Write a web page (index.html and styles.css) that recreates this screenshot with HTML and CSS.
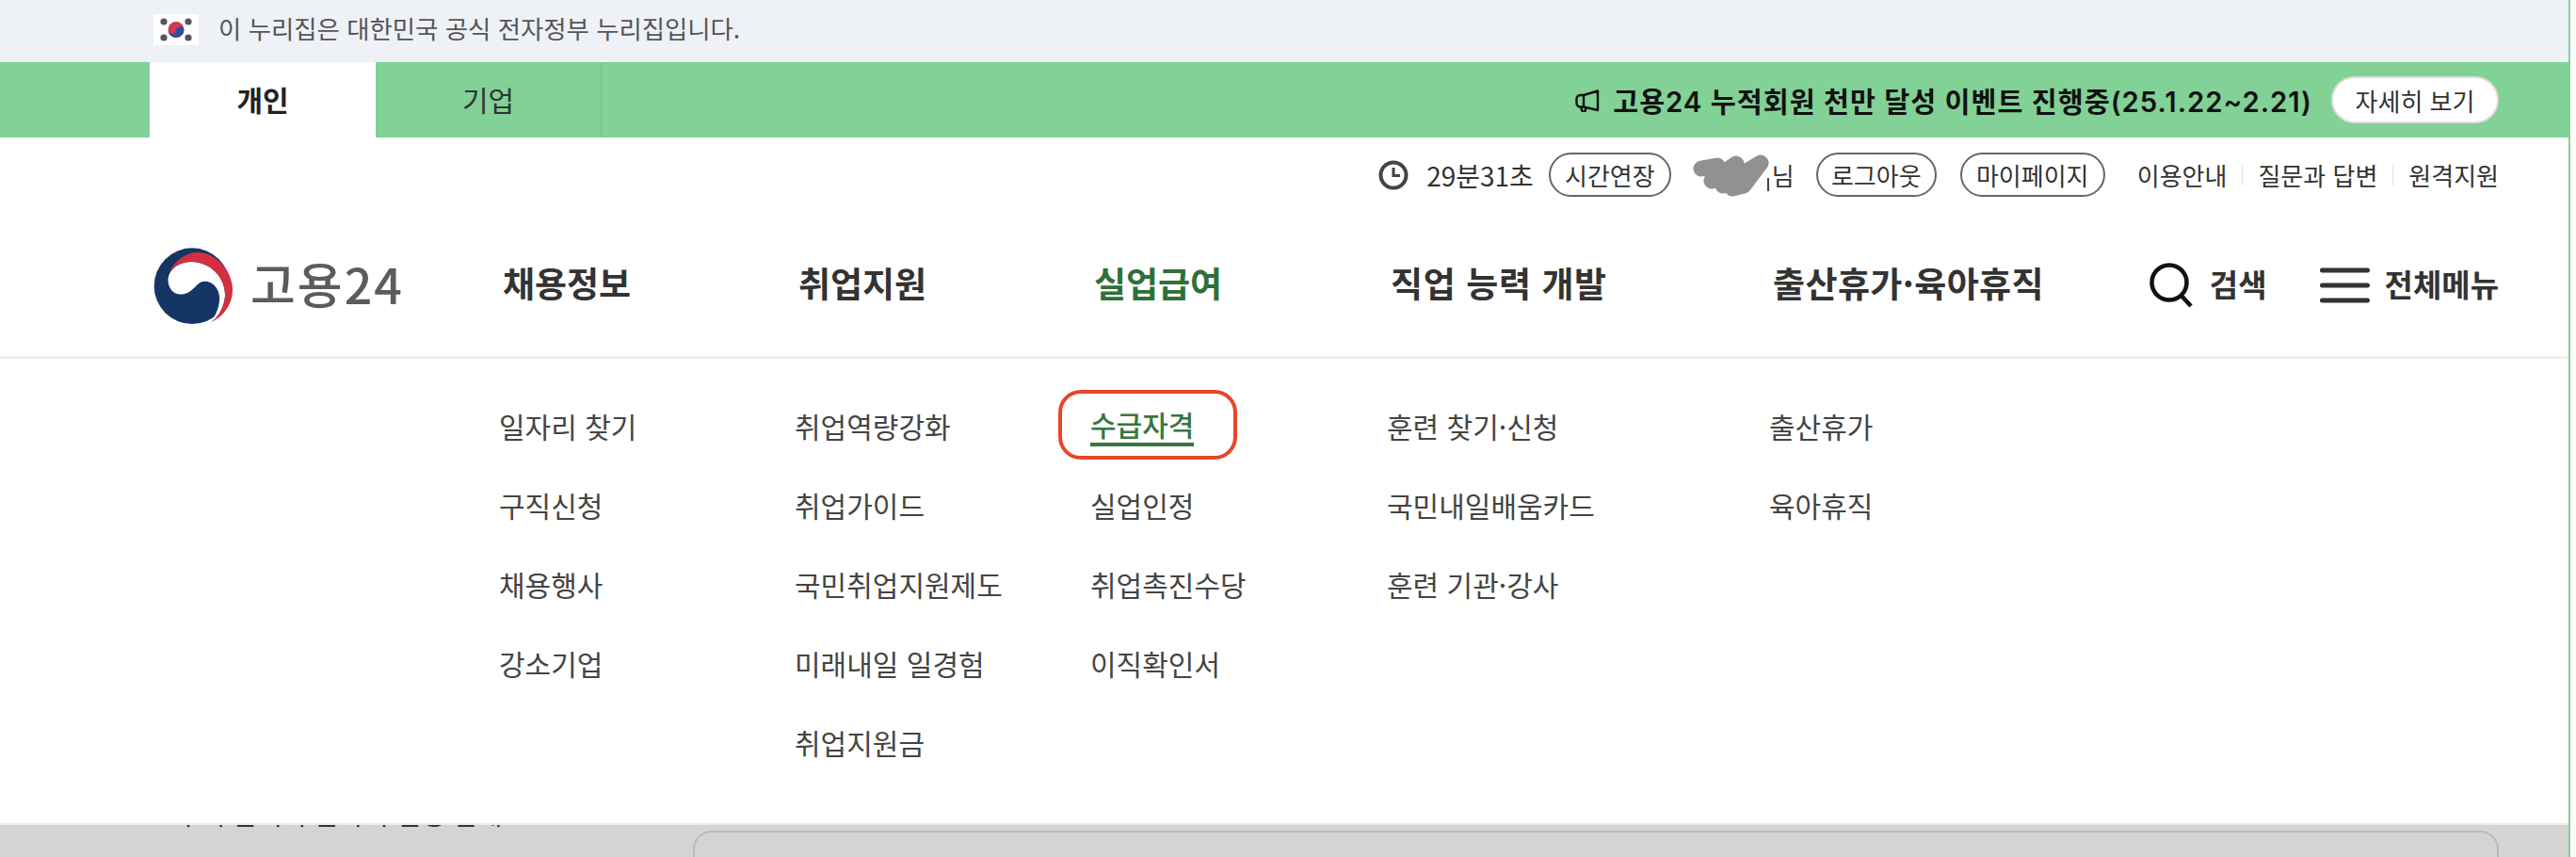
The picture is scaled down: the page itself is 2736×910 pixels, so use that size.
FILE: index.html
```html
<!DOCTYPE html>
<html lang="ko">
<head>
<meta charset="utf-8">
<title>고용24</title>
<link rel="stylesheet" href="styles.css">
</head>
<body>
<div class="page">
  <div class="gov">
    <svg class="flag" viewBox="0 0 48 33" aria-hidden="true">
      <rect width="48" height="33" fill="#fff"/>
      <g fill="#555"><circle cx="11" cy="8" r="3.6"/><circle cx="37" cy="8" r="3.6"/><circle cx="11" cy="25" r="3.6"/><circle cx="37" cy="25" r="3.6"/></g>
      <circle cx="24" cy="16.500" r="8.500" fill="#d5374c"/>
      <path d="M15.500 16.500a4.300 4.300 0 0 0 8.500 1a4.300 4.300 0 0 1 8.500-1a8.500 8.500 0 0 1-17 0z" fill="#2a4f9e"/>
    </svg>
    <span class="gov-text">이 누리집은 대한민국 공식 전자정부 누리집입니다.</span>
  </div>

  <div class="strip">
    <a class="tab tab-on">개인</a>
    <a class="tab tab-off">기업</a>
    <div class="notice">
      <svg class="horn" viewBox="0 0 26 24" aria-hidden="true">
        <path d="M24 1.500V22L9 18.500H5.500a4 4 0 0 1-4-4V10a4 4 0 0 1 4-4H9zM9 6v12.500M6 18.500l1 3a2 2 0 0 0 4 0v-1.500" fill="none" stroke="#111" stroke-width="2.400" stroke-linejoin="round" stroke-linecap="round"/>
      </svg>
      <span class="notice-text">고용24 누적회원 천만 달성 이벤트 진행중(25.1.22~2.21)</span>
      <a class="more">자세히 보기</a>
    </div>
  </div>

  <div class="util">
    <svg class="clock" viewBox="0 0 32 32" aria-hidden="true">
      <circle cx="16" cy="16" r="13.500" fill="none" stroke="#444" stroke-width="4"/>
      <path d="M16 8v8.500h7" fill="none" stroke="#444" stroke-width="3"/>
    </svg>
    <span class="timer">29분31초</span>
    <a class="pill pill-time">시간연장</a>
    <svg class="scribble" viewBox="0 0 88 46" aria-hidden="true">
      <path d="M84 25v14" stroke="#444" stroke-width="2"/>
      <path d="M13 15L30 12L24 28L50 10L36 33L76 9L58 33L46 36" fill="none" stroke="#919191" stroke-width="17" stroke-linecap="round" stroke-linejoin="round"/>
    </svg>
    <span class="user">님</span>
    <a class="pill pill-logout">로그아웃</a>
    <a class="pill pill-mypage">마이페이지</a>
    <a class="link link-first">이용안내</a>
    <a class="link link-sep">질문과 답변</a>
    <a class="link link-sep">원격지원</a>
  </div>

  <header class="cols gnb">
    <a class="logo">
      <svg class="mark" viewBox="68 65 254 245" aria-hidden="true">
        <circle cx="192" cy="188" r="122" fill="#153665"/>
        <path d="M115 170C115 135 150 110 190 110C250 110 300 160 298 220C296 255 275 290 250 306C270 280 282 250 280 222C278 195 258 173 232 173C205 173 195 215 155 215C132 215 115 195 115 170Z" fill="#fff"/>
        <path d="M118 150C135 100 180 78 215 80C280 85 325 150 322 205C320 250 290 290 250 306C275 290 296 255 298 220C300 160 250 110 190 110C155 110 130 125 118 150Z" fill="#d32f3f"/>
      </svg>
      <span class="logo-text">고용24</span>
    </a>
    <a class="gnb-item">채용정보</a>
    <a class="gnb-item">취업지원</a>
    <a class="gnb-item gnb-on">실업급여</a>
    <a class="gnb-item gnb-wide">직업 능력 개발</a>
    <div class="tools">
      <a class="gnb-item gnb-last">출산휴가·육아휴직</a>
      <div class="tool-group">
        <a class="tool tool-search">
          <svg class="search" viewBox="0 0 46 48" aria-hidden="true">
            <circle cx="21" cy="21" r="18.500" fill="none" stroke="#111" stroke-width="4.500"/>
            <path d="M33 34l11 12" stroke="#111" stroke-width="4.500"/>
          </svg>
          <span class="tool-label">검색</span>
        </a>
        <a class="tool tool-all">
          <svg class="burger" viewBox="0 0 53 38" aria-hidden="true">
            <path d="M2.500 3h48M2.500 19h48M2.500 35h48" stroke="#333" stroke-width="5" stroke-linecap="round"/>
          </svg>
          <span class="tool-label">전체메뉴</span>
        </a>
      </div>
    </div>
  </header>

  <nav class="cols panel">
    <div></div>
    <ul class="sub">
      <li>일자리 찾기</li><li>구직신청</li><li>채용행사</li><li>강소기업</li>
    </ul>
    <ul class="sub">
      <li>취업역량강화</li><li>취업가이드</li><li>국민취업지원제도</li><li>미래내일 일경험</li><li>취업지원금</li>
    </ul>
    <ul class="sub">
      <li><span class="current">수급자격</span></li><li>실업인정</li><li>취업촉진수당</li><li>이직확인서</li>
    </ul>
    <ul class="sub">
      <li>훈련 찾기·신청</li><li>국민내일배움카드</li><li>훈련 기관·강사</li>
    </ul>
    <ul class="sub">
      <li>출산휴가</li><li>육아휴직</li>
    </ul>
  </nav>

  <div class="under">
    <div class="under-line"><span>구직 급여 수급자격 신청 안내</span></div>
    <div class="under-box"></div>
  </div>
</div>
</body>
</html>
```
FILE: styles.css
```css
* { box-sizing: border-box; }
html, body { margin: 0; padding: 0; background: #fff; }
body { font-family: "Noto Sans CJK KR", "Noto Sans", sans-serif; color: #333; height: 910px; overflow: hidden; }
a { color: inherit; text-decoration: none; }
ul { list-style: none; margin: 0; padding: 0; }

.page { width: 2730px; height: 910px; border-right: 2px solid #82d197; display: flex; flex-direction: column; overflow: hidden; }
.page > * { flex-shrink: 0; }

/* government banner */
.gov { height: 66px; background: #eef1f6; display: flex; align-items: center; padding-left: 163px; }
.flag { width: 48px; height: 33px; margin-top: -4px; }
.gov-text { margin-left: 21px; font-size: 26.400px; color: #555; margin-top: -8px; }

/* green strip */
.strip { height: 80px; background: #82d197; display: flex; align-items: stretch; padding-left: 159px; }
.tab { width: 240px; display: flex; align-items: center; justify-content: center; font-size: 30px; padding-bottom: 2px; }
.tab-on { background: #fff; font-weight: 700; color: #222; }
.tab-off { border-right: 1px solid #74bd88; color: #333; }
.notice { flex: 1; display: flex; align-items: center; justify-content: flex-end; padding-right: 74px; }
.horn { width: 26px; height: 24px; margin-right: 14px; margin-top: 2px; }
.notice-text { font-family: "Inter", "Noto Sans CJK KR", sans-serif; font-size: 29.300px; font-weight: 600; letter-spacing: 1px; color: #111; margin-right: 20px; }
.more { width: 178px; height: 50px; border-radius: 25px; background: #fff; border: 2px solid #dedede; display: flex; align-items: center; justify-content: center; font-size: 26px; color: #333; }

/* utility row */
.util { height: 82px; padding-bottom: 3px; display: flex; align-items: center; justify-content: flex-end; padding-right: 74px; font-size: 26px; color: #333; }
.clock { width: 32px; height: 32px; margin-right: 19px; }
.timer { font-size: 28px; margin-right: 16px; }
.pill { height: 47px; border: 2px solid #666; border-radius: 24px; display: flex; align-items: center; justify-content: center; }
.pill-time { width: 130px; margin-right: 19px; }
.scribble { width: 88px; height: 46px; margin-top: 2px; }
.user { margin-right: 23px; }
.pill-logout { width: 128px; margin-right: 25px; }
.pill-mypage { width: 154px; margin-right: 34px; }
.link-sep { margin-left: 33px; position: relative; }
.link-sep::before { content: ""; position: absolute; left: -17px; top: 50%; width: 1px; height: 22px; margin-top: -11px; background: #e2e2e2; }

/* shared columns */
.cols { display: grid; grid-template-columns: 530px 314px 314px 315px 406px 1fr; }

/* main nav */
.gnb { height: 153px; align-items: center; border-bottom: 3px solid #eee; }
.logo { display: flex; align-items: center; padding-left: 163px; }
.mark { width: 84px; height: 81px; }
.logo-text { margin-left: 19px; margin-bottom: 4px; font-size: 52px; font-weight: 500; color: #5c5c5c; letter-spacing: 2px; white-space: nowrap; line-height: 1; }
.gnb-item { padding-left: 4px; margin-bottom: 6px; font-size: 37px; font-weight: 700; color: #333; white-space: nowrap; }
.gnb-on { color: #2f7039; }
.gnb-wide { letter-spacing: 0.600px; }
.tools { display: flex; align-items: center; justify-content: space-between; padding-right: 74px; }
.gnb-last { letter-spacing: 0.400px; }
.tool-group { display: flex; align-items: center; }
.tool { display: flex; align-items: center; font-size: 33px; font-weight: 700; color: #333; }
.tool-label { margin-bottom: 4px; }
.search { width: 46px; height: 48px; margin-right: 18px; }
.tool-search { margin-right: 56px; }
.burger { width: 53px; height: 38px; margin-right: 16px; }

/* submenu panel */
.panel { height: 493px; padding-top: 29px; background: #fff; }
.sub li { height: 84px; display: flex; align-items: center; font-size: 30px; color: #444; white-space: nowrap; }
.current { position: relative; color: #37763f; font-weight: 500; border-bottom: 4px solid #37763f; line-height: 40px; }
.current::after { content: ""; position: absolute; left: -34px; right: -46px; top: -16px; bottom: -18px; border: 4px solid #e8452a; border-radius: 24px; }

/* dimmed page behind the menu */
.under { flex: 1; background: #d4d4d4; border-top: 2px solid #ececec; }
.under-line { height: 4px; overflow: hidden; padding-left: 187px; font-size: 28.500px; line-height: 40px; color: #333; }
.under-line span { display: block; margin-top: -32px; }
.under-box { margin: 2px 74px 0 736px; height: 60px; border: 2px solid #bbb; border-radius: 20px; }
```
